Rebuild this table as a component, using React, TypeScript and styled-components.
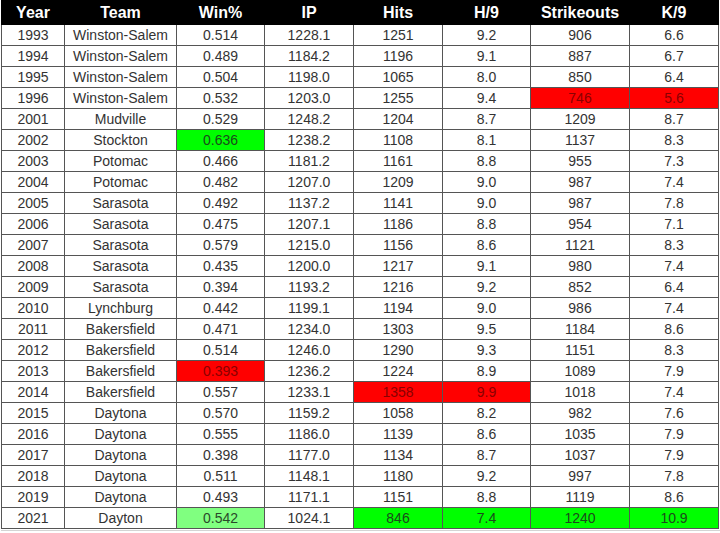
import React from "react";
import styled, { createGlobalStyle } from "styled-components";

const Global = createGlobalStyle`
  html, body { margin: 0; padding: 0; background: #fff; }
  body { font-family: "Liberation Sans", Arial, sans-serif; }
`;

const Page = styled.div`
  padding: 0 3px 0 1px;
  background: #fff;
`;

const Footer = styled.div`
  height: 1px;
  margin-top: 1px;
  background: #d4d4d4;
  width: 719px;
`;

const Table = styled.table`
  border-collapse: collapse;
  table-layout: fixed;
  width: 717px;
  font-family: "Liberation Sans", Arial, sans-serif;
`;

const Th = styled.th`
  background: #000;
  color: #fff;
  font-weight: bold;
  font-size: 16px;
  height: 23px;
  padding: 0;
  text-align: center;
  border: 1px solid #000;
`;

type Tone = "none" | "red" | "green" | "lightgreen";

const bg: Record<Tone, string> = {
  none: "#fff",
  red: "#ff0000",
  green: "#00ff00",
  lightgreen: "#80ff80",
};
const fg: Record<Tone, string> = {
  none: "#333",
  red: "#8a0000",
  green: "#1c4a1c",
  lightgreen: "#2a4a2a",
};

const Td = styled.td<{ $tone: Tone }>`
  background: ${(p) => bg[p.$tone]};
  color: ${(p) => fg[p.$tone]};
  font-size: 14px;
  height: 20px;
  padding: 0;
  text-align: center;
  border: 1px solid #555;
  white-space: nowrap;
`;

const widths = [63, 112, 88, 89, 89, 88, 99, 89];
const headers = ["Year", "Team", "Win%", "IP", "Hits", "H/9", "Strikeouts", "K/9"];

type Row = { cells: string[]; tones?: Record<number, Tone> };

const rows: Row[] = [
  { cells: ["1993", "Winston-Salem", "0.514", "1228.1", "1251", "9.2", "906", "6.6"] },
  { cells: ["1994", "Winston-Salem", "0.489", "1184.2", "1196", "9.1", "887", "6.7"] },
  { cells: ["1995", "Winston-Salem", "0.504", "1198.0", "1065", "8.0", "850", "6.4"] },
  { cells: ["1996", "Winston-Salem", "0.532", "1203.0", "1255", "9.4", "746", "5.6"], tones: { 6: "red", 7: "red" } },
  { cells: ["2001", "Mudville", "0.529", "1248.2", "1204", "8.7", "1209", "8.7"] },
  { cells: ["2002", "Stockton", "0.636", "1238.2", "1108", "8.1", "1137", "8.3"], tones: { 2: "green" } },
  { cells: ["2003", "Potomac", "0.466", "1181.2", "1161", "8.8", "955", "7.3"] },
  { cells: ["2004", "Potomac", "0.482", "1207.0", "1209", "9.0", "987", "7.4"] },
  { cells: ["2005", "Sarasota", "0.492", "1137.2", "1141", "9.0", "987", "7.8"] },
  { cells: ["2006", "Sarasota", "0.475", "1207.1", "1186", "8.8", "954", "7.1"] },
  { cells: ["2007", "Sarasota", "0.579", "1215.0", "1156", "8.6", "1121", "8.3"] },
  { cells: ["2008", "Sarasota", "0.435", "1200.0", "1217", "9.1", "980", "7.4"] },
  { cells: ["2009", "Sarasota", "0.394", "1193.2", "1216", "9.2", "852", "6.4"] },
  { cells: ["2010", "Lynchburg", "0.442", "1199.1", "1194", "9.0", "986", "7.4"] },
  { cells: ["2011", "Bakersfield", "0.471", "1234.0", "1303", "9.5", "1184", "8.6"] },
  { cells: ["2012", "Bakersfield", "0.514", "1246.0", "1290", "9.3", "1151", "8.3"] },
  { cells: ["2013", "Bakersfield", "0.393", "1236.2", "1224", "8.9", "1089", "7.9"], tones: { 2: "red" } },
  { cells: ["2014", "Bakersfield", "0.557", "1233.1", "1358", "9.9", "1018", "7.4"], tones: { 4: "red", 5: "red" } },
  { cells: ["2015", "Daytona", "0.570", "1159.2", "1058", "8.2", "982", "7.6"] },
  { cells: ["2016", "Daytona", "0.555", "1186.0", "1139", "8.6", "1035", "7.9"] },
  { cells: ["2017", "Daytona", "0.398", "1177.0", "1134", "8.7", "1037", "7.9"] },
  { cells: ["2018", "Daytona", "0.511", "1148.1", "1180", "9.2", "997", "7.8"] },
  { cells: ["2019", "Daytona", "0.493", "1171.1", "1151", "8.8", "1119", "8.6"] },
  {
    cells: ["2021", "Dayton", "0.542", "1024.1", "846", "7.4", "1240", "10.9"],
    tones: { 2: "lightgreen", 4: "green", 5: "green", 6: "green", 7: "green" },
  },
];

export default function App() {
  return (
    <Page>
      <Global />
      <Table>
        <colgroup>
          {widths.map((w, i) => (
            <col key={i} style={{ width: w }} />
          ))}
        </colgroup>
        <thead>
          <tr>
            {headers.map((h) => (
              <Th key={h}>{h}</Th>
            ))}
          </tr>
        </thead>
        <tbody>
          {rows.map((r) => (
            <tr key={r.cells[0]}>
              {r.cells.map((c, i) => (
                <Td key={i} $tone={r.tones?.[i] ?? "none"}>
                  {c}
                </Td>
              ))}
            </tr>
          ))}
        </tbody>
      </Table>
      <Footer />
    </Page>
  );
}
